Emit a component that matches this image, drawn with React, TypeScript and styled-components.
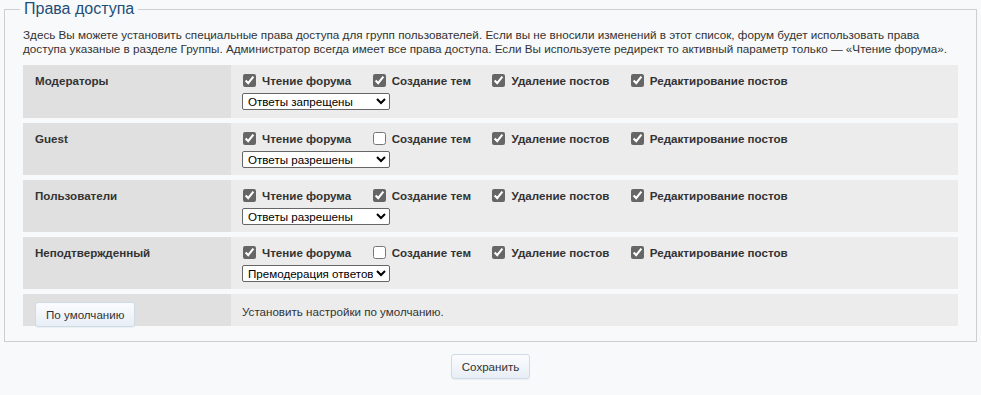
import React, { FC } from 'react';
import styled, { createGlobalStyle } from 'styled-components';

const GlobalStyle = createGlobalStyle`
  html, body {
    margin: 0;
    padding: 0;
    background: #f8f9fb;
    font-family: 'Liberation Sans', Arial, sans-serif;
    color: #333;
  }
`;

const Page = styled.div`
  padding: 0 4px;
`;

const Fieldset = styled.fieldset`
  margin: 0;
  padding: 4px 18px 15px 18px;
  border: 1px solid #cfcfcf;
  background: #f8f9fb;
`;

const Legend = styled.legend`
  padding: 0 4px;
  margin-left: -3px;
  font-size: 16px;
  line-height: 18px;
  color: #1f4e79;
`;

const Intro = styled.p`
  margin: 6px 0 9px 0;
  font-size: 11.7px;
  line-height: 14px;
  color: #333;
`;

const Table = styled.div`
  display: grid;
  grid-template-columns: 208px 1fr;
  row-gap: 5px;
`;

const NameCell = styled.div<{ $h: number }>`
  background: #e0e0e0;
  padding: 8px 12px 0 12px;
  height: ${(p) => p.$h}px;
  box-sizing: border-box;
  font-size: 11.6px;
  font-weight: bold;
  line-height: 15px;
  color: #333;
`;

const ValueCell = styled.div<{ $h: number }>`
  background: #ececec;
  padding: 7px 11px 0 11px;
  height: ${(p) => p.$h}px;
  box-sizing: border-box;
  font-size: 11.6px;
  line-height: 15px;
`;

const Checks = styled.div`
  display: flex;
  align-items: center;
  height: 17px;
`;

const CheckItem = styled.label`
  display: flex;
  align-items: center;
  margin-right: 20.5px;
  font-size: 11.6px;
  font-weight: bold;
  color: #333;

  input {
    width: 13px;
    height: 13px;
    margin: 0 6px 0 1px;
    accent-color: #666;
  }
`;

const Select = styled.select`
  margin-top: 4px;
  width: 148px;
  height: 17px;
  padding: 0 0 0 1px;
  font-family: 'Liberation Sans', Arial, sans-serif;
  font-size: 11.6px;
  color: #000;
  background: #fff;
  border: 1px solid #666;
  border-radius: 2px;
`;

const Button = styled.button`
  font-family: 'Liberation Sans', Arial, sans-serif;
  font-size: 11.6px;
  color: #333;
  padding: 0 10px;
  height: 25px;
  border: 1px solid #cfdbe7;
  border-radius: 3px;
  background: linear-gradient(#fbfcfe, #e8eef6);
  box-shadow: 0 1px 1px rgba(0, 0, 0, 0.05);
`;

const Note = styled.span`
  display: block;
  padding-top: 3px;
  font-size: 11.6px;
  color: #333;
`;

const Footer = styled.div`
  display: flex;
  justify-content: center;
  padding: 12px 0;
`;

const groups = [
  { name: 'Модераторы', create: true, reply: 'Ответы запрещены', h: 53 },
  { name: 'Guest', create: false, reply: 'Ответы разрешены', h: 52 },
  { name: 'Пользователи', create: true, reply: 'Ответы разрешены', h: 52 },
  { name: 'Неподтвержденный', create: false, reply: 'Премодерация ответов', h: 52 },
];

const replyOptions = ['Ответы запрещены', 'Ответы разрешены', 'Премодерация ответов'];

const App: FC = () => (
  <Page>
    <GlobalStyle />
    <Fieldset>
      <Legend>Права доступа</Legend>
      <Intro>
        Здесь Вы можете установить специальные права доступа для групп пользователей. Если вы не вносили изменений в этот список, форум будет использовать права
        доступа указаные в разделе Группы. Администратор всегда имеет все права доступа. Если Вы используете редирект то активный параметр только — «Чтение форума».
      </Intro>
      <Table>
        {groups.map((g) => (
          <React.Fragment key={g.name}>
            <NameCell $h={g.h}>{g.name}</NameCell>
            <ValueCell $h={g.h}>
              <Checks>
                <CheckItem>
                  <input type="checkbox" defaultChecked />
                  Чтение форума
                </CheckItem>
                <CheckItem>
                  <input type="checkbox" defaultChecked={g.create} />
                  Создание тем
                </CheckItem>
                <CheckItem>
                  <input type="checkbox" defaultChecked />
                  Удаление постов
                </CheckItem>
                <CheckItem>
                  <input type="checkbox" defaultChecked />
                  Редактирование постов
                </CheckItem>
              </Checks>
              <Select defaultValue={g.reply}>
                {replyOptions.map((o) => (
                  <option key={o}>{o}</option>
                ))}
              </Select>
            </ValueCell>
          </React.Fragment>
        ))}
        <NameCell $h={32}>
          <Button>По умолчанию</Button>
        </NameCell>
        <ValueCell $h={32}>
          <Note>Установить настройки по умолчанию.</Note>
        </ValueCell>
      </Table>
    </Fieldset>
    <Footer>
      <Button>Сохранить</Button>
    </Footer>
  </Page>
);

export default App;
